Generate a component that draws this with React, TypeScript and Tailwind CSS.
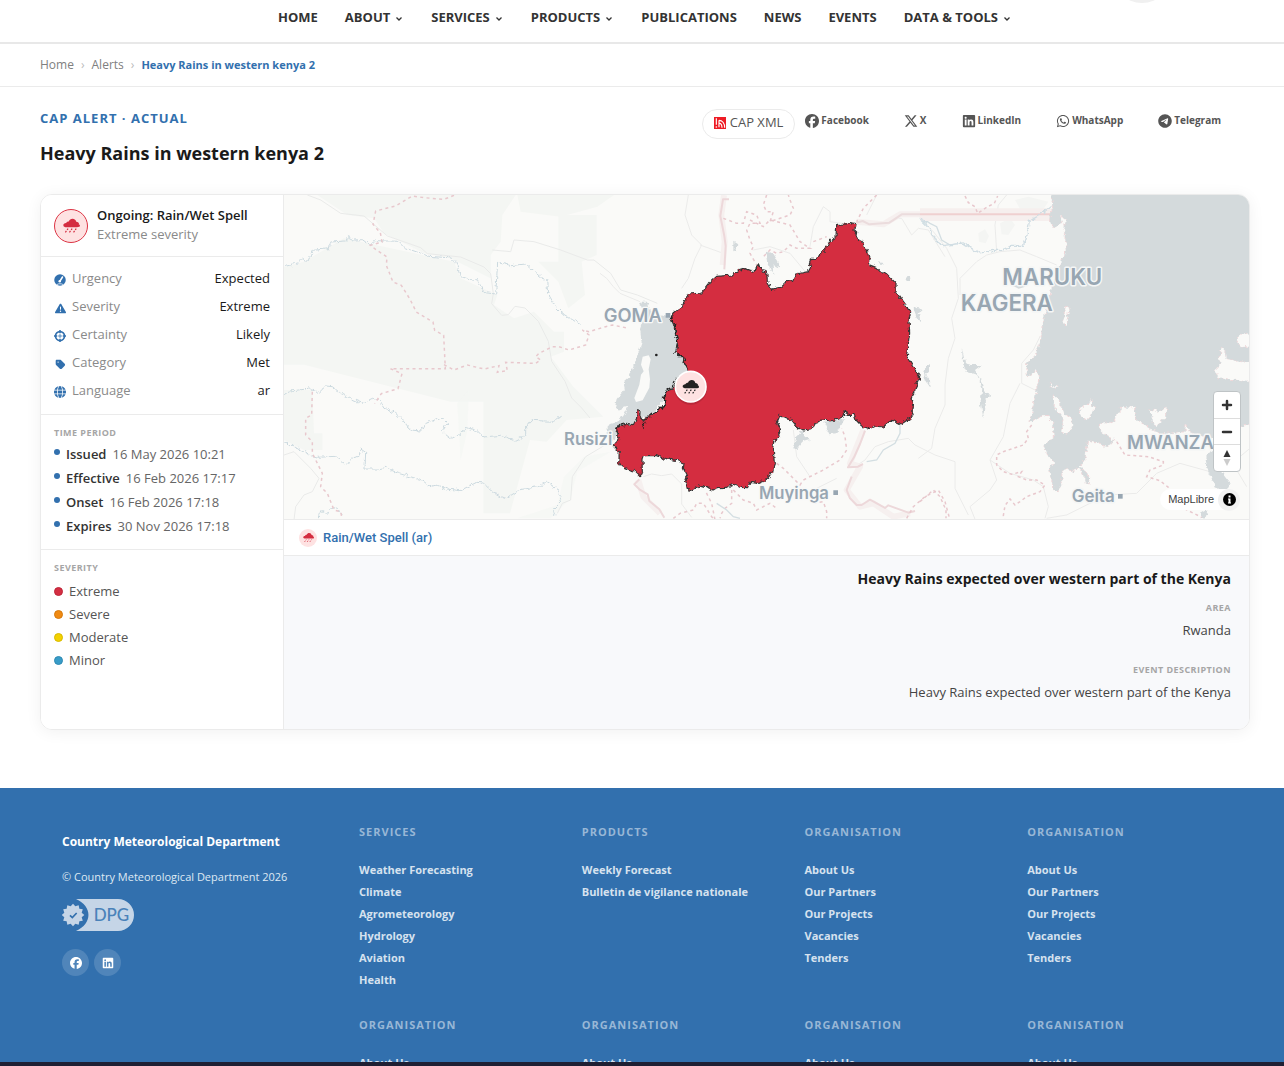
import type { ReactNode } from "react";
import {
  FaFacebook,
  FaGlobe,
  FaLinkedin,
  FaTag,
  FaTelegram,
  FaTriangleExclamation,
  FaWhatsapp,
  FaXTwitter,
} from "react-icons/fa6";

const navItems = [
  { label: "HOME" },
  { label: "ABOUT", menu: true },
  { label: "SERVICES", menu: true },
  { label: "PRODUCTS", menu: true },
  { label: "PUBLICATIONS" },
  { label: "NEWS" },
  { label: "EVENTS" },
  { label: "DATA & TOOLS", menu: true },
];

const shareLinks = [
  { label: "Facebook", icon: <FaFacebook size={14} /> },
  { label: "X", icon: <FaXTwitter size={14} /> },
  { label: "LinkedIn", icon: <FaLinkedin size={14} /> },
  { label: "WhatsApp", icon: <FaWhatsapp size={14} /> },
  { label: "Telegram", icon: <FaTelegram size={14} /> },
];

const times = [
  ["Issued", "16 May 2026 10:21"],
  ["Effective", "16 Feb 2026 17:17"],
  ["Onset", "16 Feb 2026 17:18"],
  ["Expires", "30 Nov 2026 17:18"],
];

const legend = [
  { label: "Extreme", dot: "bg-[#d42e42] border-[#bd2639]" },
  { label: "Severe", dot: "bg-[#f08a12] border-[#d67a0d]" },
  { label: "Moderate", dot: "bg-[#f3d100] border-[#d8ba00]" },
  { label: "Minor", dot: "bg-[#389cc8] border-[#2f8ab3]" },
];

const organisation = ["About Us", "Our Partners", "Our Projects", "Vacancies", "Tenders"];

const footerColumns = [
  {
    title: "SERVICES",
    links: ["Weather Forecasting", "Climate", "Agrometeorology", "Hydrology", "Aviation", "Health"],
  },
  { title: "PRODUCTS", links: ["Weekly Forecast", "Bulletin de vigilance nationale"] },
  { title: "ORGANISATION", links: organisation },
  { title: "ORGANISATION", links: organisation },
  { title: "ORGANISATION", links: ["About Us"] },
  { title: "ORGANISATION", links: ["About Us"] },
  { title: "ORGANISATION", links: ["About Us"] },
  { title: "ORGANISATION", links: ["About Us"] },
];

function RainCloudShape() {
  return (
    <>
      <path d="M12 30C5 30 1 28 1 24c0-3 3-6 8-6 1-3 4-5 8-5 2-5 6-8 11-8 6 0 10 4 11 9 5 1 8 3 8 6l-1 1c3 1 4 3 4 5 0 3-4 4-9 4z" />
      <path
        d="m15 34-3 4m-2 3-3 4M27 34l-3 4m-2 3-3 4M39 34l-3 4m-2 3-3 4"
        fill="none"
        stroke="currentColor"
        strokeWidth="3.500"
      />
    </>
  );
}

function RainCloud({ size }: { size: number }) {
  return (
    <svg width={size} height={size} viewBox="0 0 50 50" fill="currentColor" aria-hidden="true">
      <RainCloudShape />
    </svg>
  );
}

function GaugeIcon() {
  return (
    <svg width="12" height="12" viewBox="0 0 24 24" aria-hidden="true">
      <circle cx="12" cy="12" r="11.500" fill="currentColor" />
      <path d="m12 14 5-8" stroke="#fff" strokeWidth="3" strokeLinecap="round" />
      <circle cx="11.500" cy="14.500" r="2.500" fill="#fff" />
      <path d="M6 21c3-2 9-2 12 0" fill="none" stroke="#fff" strokeWidth="1.500" />
    </svg>
  );
}

function TargetIcon() {
  return (
    <svg width="12" height="12" viewBox="0 0 24 24" fill="none" stroke="currentColor" aria-hidden="true">
      <circle cx="12" cy="12" r="9" strokeWidth="3.500" />
      <path d="M12 0v6M12 18v6M0 12h6M18 12h6" strokeWidth="3" />
      <path d="M12 7v10M7 12h10" strokeWidth="1.500" />
    </svg>
  );
}

function Chevron() {
  return (
    <svg width="10" height="10" viewBox="0 0 10 10" fill="none" stroke="currentColor" strokeWidth="1.300" aria-hidden="true">
      <path d="m2.500 4.500 2.500 2.500 2.500-2.500" />
    </svg>
  );
}

function CapLogo() {
  return (
    <svg width="12" height="12" viewBox="0 0 36 36" aria-hidden="true">
      <path fill="#ee1c25" d="M0 0h36v36H0z" />
      <path
        d="M7 4v19M15 10v21M15 10c10 0 17 9 17 22M15 18c6 1 9 6 9 14"
        fill="none"
        stroke="#fff"
        strokeWidth="3.500"
      />
      <circle cx="7" cy="30" r="2.500" fill="#fff" />
    </svg>
  );
}

function DpgBadge() {
  const points = Array.from({ length: 24 }, (_, i) => {
    const r = i % 2 ? 27 : 34;
    const a = (i * Math.PI) / 12;
    return `${(33 + r * Math.sin(a)).toFixed(1)},${(48 - r * Math.cos(a)).toFixed(1)}`;
  }).join(" ");
  return (
    <svg width="72" height="32" viewBox="0 0 216 96" aria-label="DPG" role="img">
      <path d="M42 0h126a48 48 0 0 1 0 96H42c50-22 50-74 0-96" fill="#c5d5e7" />
      <polygon points={points} fill="#c5d5e7" />
      <path d="m24 49 7 7 13-14" fill="none" stroke="#3270ae" strokeWidth="5" />
      <text x="95" y="66" fill="#4a82b9" fontSize="51" fontFamily="Lato, sans-serif" fontWeight="500">
        DPG
      </text>
    </svg>
  );
}

function AlertMap() {
  return (
    <svg
      className="block h-full w-full"
      viewBox="0 0 965 324"
      preserveAspectRatio="xMidYMid slice"
      role="img"
      aria-label="Map of the alert area"
    >
      <defs>
        {/* roughens shores, rivers and borders */}
        <filter id="rough" x="-5%" y="-5%" width="110%" height="110%" colorInterpolationFilters="sRGB">
          <feTurbulence type="fractalNoise" baseFrequency="0.07" numOctaves="3" seed="4" />
          <feDisplacementMap in="SourceGraphic" scale="16" xChannelSelector="R" yChannelSelector="G" />
        </filter>
      </defs>
      <rect width="965" height="324" fill="#fafaf8" />
      {/* western forests, rivers and districts */}
      <g transform="translate(0 -5) scale(.33333)">
        <g fill="#f4f6f3">
          <path d="M0 15h100l90 60 80 10 30 45 120 60 80 15 120 60v-70l30-40 5-80 40-60h-90V15H0zM60 524H0V230l60-15 120-70 330 70 20 50 110 50-10 30 60 40 60-20 60 60h30v60l-80 30-40 60-30 60H500z" />
          <path d="M823 75h115v120l-45 20 10 100-50 40-30-80-60-60h60zM598 530h90l100-40 20 20 60 80 90 90-110 10-60 65-50-5-60 220H598zM60 780h55v-50H90l-5-130H0v150zM700 15h290l-50 35-110 30-120-15z" />
          <path d="M520 640l35-40-5 120-20 90zM840 860l60-60 80-15-100 60-20 80-60 60h-100l120-40z" opacity=".6" />
        </g>
        <g fill="none" stroke="#e9eae9" strokeWidth="3">
          <path d="m70 15 40 15 60 40 70 8 70 60 100 35 20 18 100 10 70 30 20 20 8 60-5 30 30 35 20-2 20-25 30 5 40 40 30 60 10 60 40 60 20 50 30 30 25 30M625 180l55 5 10-35 60 5 80 25 80 30 20 0 50 40 30 50 50 15 60 25M0 795l30-10 50 50 25 30-20 40-25 10-25 35-5 40M820 970l15-30 25-10 5-70 40-60 50-30 20-15" />
        </g>
        <g fill="none" stroke="#cbd9df" strokeWidth="3" strokeLinejoin="round" filter="url(#rough)">
          <path d="m0 230 45-12 10-10 20 3 10-30 50-5 5-20 45-3 5-13 20 10 25-1 25 18 15-15 70 2 20 20 70 25 70 5 10 10 15 45 35 12 15-2 20 38 35 5 6-95 40 10 45-5 50 42 12 5 3 40 25 42 20 20 52 32" />
          <path d="m0 615 20-12 40-5 15-8 10 10 20 8 20-20 20 2 25 20 30 15 35 15 30-15 20 5 15 25 30 10 30 30 20 25 30 3 10-20 40-18 20 5 10 10-15 25 25 20 30-15 20-17 30 10 20 18 50-5 45 15 30-15 0-20 20-25 60 3 25-12" />
          <path d="m0 755 15 12 15-1 15 10 35 20 20 6 55-3 30 25 20-20 20-5 5-22 15 10-2 50 40 0 20-5 40 18 70 20 25 20 20-5 30 12 40 5 50-25 20 2 30 30 40 15 40-25 60-10 20-15 30 20 15 40-25 25 5 20M105 985l5-20 20 5 15-20 15 5 15 20" />
        </g>
        <path
          d="m510 16-30 12-60-5-35-5-50 30-60 15-8 40 22 25 5 28-35 10 20 15 30 20-2 25 20 50 25 10 25 40 20 40 50 30 5 25 27 15 5 100-165 0 35 15-12 45-50 15-20 30M480 524l30 16 40-15 50 12 45-10-5 20 30-5-5-25 90 3 15-10-15-10 10-10 40-20 20 0 30 10 50-15 10-30-20-15 20 5 50-15 20-5 50 10M85 605l-2 70-18 10v50l20 20 0 35 30 60-5 40 20 20 20 50 20 5 5 25"
          fill="none"
          stroke="#e8c8cd"
          strokeWidth="4.500"
          strokeDasharray="9 10"
        />
      </g>
      {/* Lake Kivu, the borders around Rwanda and the alert area */}
      <g transform="translate(316 -5) scale(.33333)">
        <path
          d="M120 338h25l5 25 70 20 20 110 30 50-80 90-35 40-45 20-25 15-35 15-5 25-15 8-10-20 0-30 25-8 25-20 15-30-15 2-10 15-15-15 5-20 25-30-5-25 20-18 15-40 20-60-5-40 15-45z"
          fill="#d4dadc"
          filter="url(#rough)"
        />
        <path d="m128 500 18-4 6 12-6 30 4 30-2 25-20 38-20 5-5-12 15-40 5-30 8-10-8-20zM72 525l18 20-10 17-20 2z" fill="#fafaf8" />
        <g fill="none" stroke="#ebebea" strokeWidth="3">
          <path d="m0 250 20 15 20 25 20 20 60 25M265 15l-10 60 20 60 30 30-20 40-20 60-20 30M300 165l70 25M630 170l10-60 30-60 20 15 0 30 70 10M830 15l-30 60M865 85l40 0 30 50 20-20 30 5 50 80M130 860l25-8 30 5 30-5 30 30 0 60 30 40M580 720l10 80 40 60M765 830l30-20 30-40 40-15 60-10 20 20 60 30 60 20 0 80 40 80M460 180l50-10 60 20 50 60M620 925l30-30 60-30" />
        </g>
        <g fill="#d4dadc" filter="url(#rough)">
          <path d="m400 152 12 8-2 20-10 4zM500 185l18 5 20 35-5 10-15-10 2 30-15-35zM673 698l60-10-20 40-25 5zM834 217l18 2-8 6zM915 265l15-5 2 12-10 4zM940 355l12-5 8 10 8 5-12 5 8 28-14-18zM970 545l8-15 12-8 0 20-12 12 12 15 2 25-14-20zM590 735l20-15 5 20 15 10-20 5-20 25-10-5z" />
        </g>
        <g fill="none" stroke="#f6f0ef" strokeWidth="18" strokeLinejoin="round">
          <path d="M372 15l-8 60 10 80-6 70M1050 73H900l-50 30-80-8M115 870l15 50 50 50M790 720l-40 100 30 10-40 70 40 50 40-10 60 40 50-10" />
        </g>
        <g fill="none" stroke="#edd8da" strokeWidth="6" strokeLinejoin="round">
          <path d="M387 28l-18 0-8 50 12 60 4 30-4 70M118 868l-15 15 15 15 25 15 5 20 30 25 15 25M795 722l-15 40-18 40-18 30 30-2 15-8M755 860l-15 40 10 25 20 20 15 0 25-16 45 25 10-8 60 22 20-5" />
          <path d="M1050 73H905l-22 15-15 10-60 5-20-10-20 5" stroke="#ebdcdd" />
        </g>
        <path
          d="M500 15l-10 30 10 20 20 0-10 30 60-20 10-20-10-25-5-15M370 85l40 15 20 0 10-35 30 10 10 25-30 0-10 20 10 30 10 20-10 20 20 35M450 90l40 20 20-20 60 15 30 50 30 20-40 0-20-10-20 20-20 5-20-10-20 20M640 155l40-15M830 15l-40 40-20 40M530 820l20 15 30 30 20 20 10-15 60-30 50-30 20-30-5-40-10-25M220 985l20-15 40-10 10-20 20 0 25 40 10 10-10-50-20-40M395 900l0 40-20 15-10 15-5 15M400 900l30 30 30 10 10 20 40-20 20 15M640 940l30-5 10 30 0 20M920 985l20-35 35-30 40-20 20 35 15 55"
          fill="none"
          stroke="#e8c8cd"
          strokeWidth="4.500"
          strokeDasharray="9 10"
        />
        <path d="M900 705l0 25-15 30-35 20-20 30-30 5M960 80l30 20 20 10 15 40 25 15M350 940l30 20 20 20 20 5" fill="none" stroke="#d3dee2" strokeWidth="4" />
        <path
          d="M710 103l42-1-2-4 15 2-3 18 8 8-2 16 17 10 5 18 10 15 7 20-1 19 22 8 15 16 17 4 20 20 8 8v25l17 25 27 38-5 22 2 40-4 30-6 37 16 28 25 37-13 28-3 17-11 18 7 25-2 20-8 15-22 15-3 3-30-15-15 14-10 9-25-3-17 8-23-8-17-18-6-17h-17l-12-7-11 20-32 7-30-3-15 10-10 18-23 5-20-11-17-22-20-8-18-6-8 19 9 20 2 25-15 12-5 28 3 40-5 25-18 23-25 10-25-4-7 19-23-1-20-9-20 9-30 1-10 7-15-7-22-7-18 9-18 9-5-19-7-15 5-15-10-20 2-15-17-8-25-4-30-6-10-5-20-1-20 2-4 12 1 35-7 15-17-17-18-5-23-10-6-8 2-35-18-20 10-8 5-17-5-20 8-15 17 1 5-6 20 4 10-19v-23l13 3-1 20 8 12 10-18 15-2 10-10 15-8 15-20-5-18 10-19 18-5 10-18 5-15 32-17-3-15-10-15-7-20-12 0-5-12 6-23-6-35-8-25-7-15 9-18 21-17 22-40 40-3 25-32 20-18 50-4 15-13 20-6 15 6 12 7 4-16 11-12 7 18 16 4 2 32 12 23 26-6 25-23 12 6 13-23 35-7 7-13-4-13 5-14h17l30-33 10-20 18-10z"
          fill="#d42d40"
          stroke="#353535"
          strokeWidth="3.500"
          strokeLinejoin="round"
          filter="url(#rough)"
        />
        <g fill="none" stroke="#222" strokeWidth="4" strokeDasharray="9 3" filter="url(#rough)">
          <path d="m213 380 10 20 4 35 6 20-6 30-8 5M234 492l14 8 6 15 12 25M222 570l-5 20-16 10-8 20 2 20-15 18-25 15-15 12 0 5-10 20-5-10M75 712l-5-12-15 5-6 15" />
        </g>
        <circle cx="169" cy="495" r="4" fill="#222" />
        <g fontFamily="Inter, sans-serif" fontWeight="600" fill="#98a6b2" stroke="#f8f9f8" strokeWidth="8" paintOrder="stroke" strokeLinejoin="round">
          <text x="11" y="395" fontSize="55">GOMA</text>
          <text x="-108" y="764" fontSize="50">Rusizi</text>
          <text x="477" y="926" fontSize="50">Muyinga</text>
        </g>
        <path d="M197 369h14v14h-14zM700 901h14v14h-14z" fill="#98a6b2" />
        <g>
          <circle cx="272" cy="594" r="50" fill="#000" opacity=".12" />
          <circle cx="272" cy="590" r="46" fill="#fee2e2" stroke="#fff" strokeWidth="5" />
          <g transform="translate(247 565)" fill="#222" color="#222">
            <RainCloudShape />
          </g>
        </g>
      </g>
      {/* Lake Victoria and its western shore */}
      <g transform="translate(636 -5) scale(.33333)">
        <g fill="none" stroke="#ebebea" strokeWidth="3">
          <path d="M0 85l40 40 40 50 30 60 5 90-20 60 10 60-20 60-10 80 0 60-30 70-10 60-40 30M260 15l-25 30-10 60 5 80M410 225l-60-25-50-20-60 5-40 10-30 20-50 50 0 50M360 440l-20 40-35 40 0 60 40 20M300 580l-30 60-20 100-40 70 20 60-20 30-60 50 20 50M210 810l60 40 70 20 30 20 15 60-10 35M380 985l60-10 120-60 90-5 60-60 70-30 90 25 60-20 60-50M950 840l30 50" />
        </g>
        <path d="M285 30l40-10 60 15-20 30-60 0zM175 130l20-12 12 20-10 22-20-5zM240 100l30-15 15 20-20 30-20-2z" fill="#f4f5f3" />
        <path d="M0 55h400v38H0z" fill="#f6efee" />
        <path d="M0 73h400" stroke="#efd0d0" strokeWidth="6" />
        <path d="M0 85l30 30 20 40 20 12 60-8 30 20 20 10 40-8 30 0 20-12 40 0 10-30 8-45 40-25 30-25" fill="none" stroke="#d0dde3" strokeWidth="4" filter="url(#rough)" />
        <g filter="url(#rough)">
          <path
            d="m393 5 5 50-10 30 10 28 27-15-4-22 16 14-5 30 6 45-2 27-14 22-10 30-17 50-10 55-17 40-5 60-18 48-25 23 2 43 28-25 8 20-13 65-15 72 40-17 15 2 15 20v45l-30 20 15 35 18 15-18 25 10 30 5 32 15 3 12-25-2-35 17-13 15 15 15-15 15 13 8 32 17 5-8-30-22-22 15-30 5-45 22 2 38 14 22-22-25-10-25-27 2-10 43-5 25-45 40 2 5 35 45 30 30 12 70-6 5-24 10 26 65 20 30-20 105-30V5z"
            fill="#d4dadc"
            stroke="#efd6d8"
            strokeWidth="3"
            strokeDasharray="6 8"
          />
          <path d="m870 785 25-15 10 40-10 25 35 45-10 20-30-5-25-50-8-35zM840 985l5-20 18-10-5 25zM125 470l10 50 20 5 30 0-20 15 25 45 5 25 20 5-20 15-5 55-8-50 5-40-15-40-32-10-10-20z" fill="#d4dadc" />
          <path
            d="M400 615l15 8 10 30 10 20 20 12 2 25-15 20-15-2 2-45-25-30-5-20zM480 655l20-10 12-20 5 25 10 5-15 20-12 15-22-15zM435 350l12-1 2 22-8 2 3 20-8 12-6-4 6-20zM950 440l15-8 35 3v34l-35 2-12-12zM905 475l10 10 2 20 40 10 40 2v60l-40-5-60-10-15-20 20-20-5-20zM685 660l20 0 10 8 25-15-5 30-25 25-15-15 0-20zM388 580l10 10 15-3-10 8-12-5z"
            fill="#fafaf8"
            stroke="#efd6d8"
            strokeWidth="3"
            strokeDasharray="5 8"
          />
        </g>
        <path
          d="M135 18l10 20 20 12 8 20 30-20 20-10 10-22M335 705l-15 20 5 20-15 20-60 20-20 10 0 30 20 20 25 8 30-8-10 15 25 10 30 0 25 15-15 20-40 15-20 15-15 10-15-18-15 20-5 30 10 30M0 935l40-35 20 20 18 40 0 25M590 755l25 40 70 5 45 15 0 10-40 15-10 20 40 12 25 20 30 50 10 10 60 30"
          fill="none"
          stroke="#e8c8cd"
          strokeWidth="4.500"
          strokeDasharray="9 9"
        />
        <path d="m278 288 20-4 18 6-20 6z" fill="#d4dadc" />
        <g fontFamily="Inter, sans-serif" fontWeight="600" fill="#98a6b2" stroke="#f4f6f6" strokeWidth="9" paintOrder="stroke" strokeLinejoin="round">
          <text x="247" y="284" fontSize="67">MARUKU</text>
          <text x="122" y="362" fontSize="67">KAGERA</text>
          <text x="621" y="778" fontSize="55">MWANZA</text>
          <text x="455" y="937" fontSize="51">Geita</text>
        </g>
        <path d="M594 912h14v14h-14z" fill="#98a6b2" />
      </g>
    </svg>
  );
}

function MapControls() {
  return (
    <>
      <div className="absolute right-2 bottom-[47px] flex w-[28px] flex-col divide-y divide-[#ddd] overflow-hidden rounded border border-[#bfc4c6] bg-white text-[#333]">
        <button type="button" aria-label="Zoom in" className="flex h-[27px] items-center justify-center">
          <svg width="12" height="12" viewBox="0 0 12 12" stroke="currentColor" strokeWidth="2.500" strokeLinecap="round">
            <path d="M6 2v8M2 6h8" />
          </svg>
        </button>
        <button type="button" aria-label="Zoom out" className="flex h-[26px] items-center justify-center">
          <svg width="12" height="12" viewBox="0 0 12 12" stroke="currentColor" strokeWidth="2.500" strokeLinecap="round">
            <path d="M2 6h8" />
          </svg>
        </button>
        <button type="button" aria-label="Reset bearing" className="flex h-[26px] items-center justify-center">
          <svg width="8" height="16" viewBox="0 0 8 16">
            <path d="M4 0 7.500 7h-7z" fill="#333" />
            <path d="M4 16 7.500 9h-7z" fill="#ccc" />
          </svg>
        </button>
      </div>
      <div className="absolute right-[9px] bottom-[9px] flex h-[21px] items-center rounded-full bg-white pl-2">
        <a href="#maplibre" className="mr-1 font-['Liberation_Sans',sans-serif] text-[11px] text-[#404040]">
          MapLibre
        </a>
        <button type="button" aria-label="Toggle attribution" className="flex size-[22px] items-center justify-center rounded-full bg-[#f2f2f2]">
          <svg width="13" height="13" viewBox="0 0 13 13">
            <circle cx="6.500" cy="6.500" r="6.500" fill="#000" />
            <path d="M5.500 2.500h2v2h-2zM5 5.500h2.500v4H8v1H5v-1h.500v-3H5z" fill="#fff" />
          </svg>
        </button>
      </div>
    </>
  );
}

function Fact({ icon, label, value }: { icon: ReactNode; label: string; value: string }) {
  return (
    <div className="flex h-7 items-center">
      <span className="mt-0.5 mr-1.5 flex w-3 justify-center text-[#3270ae]">{icon}</span>
      <dt className="text-[#8a8a8a]">{label}</dt>
      <dd className="ml-auto text-[#1a1a1a]">{value}</dd>
    </div>
  );
}

const overline = "text-[9px] leading-3 font-bold tracking-wider text-[#a6a6a6]";

export default function App() {
  return (
    <div className="flex h-screen flex-col overflow-hidden bg-white font-['Open_Sans',sans-serif] text-[13px] text-[#1a1a1a]">
      <header className="relative shrink-0 border-b-2 border-[#e8e8e8] pr-[34px] pl-10">
        <div className="absolute -top-[57px] right-[112px] size-[60px] rounded-full bg-[#f0f0f0]" />
        <nav aria-label="Main" className="flex h-[42px] justify-center gap-[27px] pt-2">
          {navItems.map((item) => (
            <a key={item.label} href="#nav" className="flex h-5 items-center gap-1 font-bold text-[#333]">
              {item.label}
              {item.menu && <Chevron />}
            </a>
          ))}
        </nav>
      </header>

      <nav aria-label="Breadcrumb" className="flex h-[43px] shrink-0 items-center gap-[7px] border-b border-[#ebebeb] pr-[34px] pl-10 text-xs text-[#808080]">
        <a href="#home">Home</a>
        <span className="text-[#bbb]">›</span>
        <a href="#alerts">Alerts</a>
        <span className="text-[#bbb]">›</span>
        <span aria-current="page" className="text-[11px] font-bold text-[#3270ae]">
          Heavy Rains in western kenya 2
        </span>
      </nav>

      <main className="shrink-0 pt-[22px] pr-[34px] pb-[58px] pl-10">
        <div className="flex items-start justify-between">
          <div>
            <p className="leading-[18px] font-bold tracking-[1px] text-[#3270ae]">CAP ALERT · ACTUAL</p>
            <h1 className="mt-3 text-lg leading-7 font-bold">Heavy Rains in western kenya 2</h1>
          </div>
          <div className="flex items-start pr-[29px]">
            <a href="#xml" className="flex h-[30px] items-center gap-1 rounded-full border border-[#ebebeb] px-[11px] pb-0.5 text-[#555]">
              <CapLogo />
              CAP XML
            </a>
            <div className="ml-2.5 flex h-[23px] items-center gap-[35px]">
              {shareLinks.map((link) => (
                <a key={link.label} href="#share" className="flex items-center gap-0.5 text-[10px] font-bold text-[#555]">
                  {link.icon}
                  {link.label}
                </a>
              ))}
            </div>
          </div>
        </div>

        <section className="mt-[27px] flex overflow-hidden rounded-xl border border-[#ebebeb] shadow-[0_2px_16px_rgba(0,0,0,0.06)]">
          <aside className="w-[243px] shrink-0 border-r border-[#ebebeb] bg-white">
            <div className="flex h-[62px] items-center gap-[9px] border-b border-[#ebebeb] px-[13px]">
              <span className="flex size-[34px] items-center justify-center rounded-full border border-[#dc3545] bg-[#fee2e2] text-[#d42d40]">
                <RainCloud size={17} />
              </span>
              <div className="pb-0.5 leading-[19px]">
                <h2 className="font-semibold">Ongoing: Rain/Wet Spell</h2>
                <p className="text-[#8a8a8a]">Extreme severity</p>
              </div>
            </div>
            <dl className="border-b border-[#ebebeb] px-[13px] pt-2 pb-[9px]">
              <Fact icon={<GaugeIcon />} label="Urgency" value="Expected" />
              <Fact icon={<FaTriangleExclamation size={11} />} label="Severity" value="Extreme" />
              <Fact icon={<TargetIcon />} label="Certainty" value="Likely" />
              <Fact icon={<FaTag size={11} />} label="Category" value="Met" />
              <Fact icon={<FaGlobe size={12} />} label="Language" value="ar" />
            </dl>
            <div className="border-b border-[#ebebeb] px-[13px] pt-3 pb-2.5">
              <h3 className={overline}>TIME PERIOD</h3>
              <ul className="mt-1">
                {times.map(([label, value]) => (
                  <li key={label} className="flex h-6 items-center">
                    <span className="mr-1.5 mb-1.5 size-1.5 rounded-full bg-[#3270ae]" />
                    <span className="mr-1.5 font-semibold text-[#333]">{label}</span>
                    <span className="text-[#666]">{value}</span>
                  </li>
                ))}
              </ul>
            </div>
            <div className="px-[13px] pt-3">
              <h3 className={overline}>SEVERITY</h3>
              <ul className="mt-1.5 text-[#555]">
                {legend.map((item) => (
                  <li key={item.label} className="flex h-[23px] items-center gap-1.5">
                    <span className={`size-[9px] rounded-full border ${item.dot}`} />
                    {item.label}
                  </li>
                ))}
              </ul>
            </div>
          </aside>

          <div className="flex min-w-0 flex-1 flex-col">
            <div className="relative h-[324px]">
              <AlertMap />
              <MapControls />
            </div>
            <div className="flex h-[37px] items-center border-y border-[#ebebeb] px-[15px]">
              <button type="button" className="flex items-center gap-1.5 font-[Roboto,sans-serif] text-[13px] font-medium text-[#3270ae]">
                <span className="flex size-[18px] items-center justify-center rounded-full bg-[#fee2e2] text-[#d42d40]">
                  <RainCloud size={11} />
                </span>
                Rain/Wet Spell (ar)
              </button>
            </div>
            <div className="flex h-[173px] flex-col items-end bg-[#f8f9fb] px-[18px] pt-3 text-right text-[#444]">
              <h2 className="text-sm leading-[22px] font-bold text-[#1a1a1a]">
                Heavy Rains expected over western part of the Kenya
              </h2>
              <h3 className={`mt-3 ${overline}`}>AREA</h3>
              <p className="mt-1.5 leading-5">Rwanda</p>
              <h3 className={`mt-6 ${overline}`}>EVENT DESCRIPTION</h3>
              <p className="mt-1.5 leading-5">Heavy Rains expected over western part of the Kenya</p>
            </div>
          </div>
        </section>
      </main>

      <footer className="flex min-h-0 flex-1 overflow-hidden bg-[#3270ae] pr-[34px] pl-[62px] text-[11px] text-white">
        <div className="w-[297px] shrink-0 pt-11">
          <p className="text-xs leading-5 font-bold">Country Meteorological Department</p>
          <p className="mt-[15px] leading-5 text-[#dfe9f3]">© Country Meteorological Department 2026</p>
          <a href="#dpg" className="mt-3 block w-[72px]">
            <DpgBadge />
          </a>
          <div className="mt-[18px] flex gap-[5px]">
            <a href="#facebook" aria-label="Facebook" className="flex size-[27px] items-center justify-center rounded-full bg-white/15">
              <FaFacebook size={12} />
            </a>
            <a href="#linkedin" aria-label="LinkedIn" className="flex size-[27px] items-center justify-center rounded-full bg-white/15">
              <FaLinkedin size={12} />
            </a>
          </div>
        </div>
        <div className="grid flex-1 grid-cols-4 content-start gap-y-6 pt-[34px]">
          {footerColumns.map((column, i) => (
            <div key={i}>
              <h3 className="leading-5 font-bold tracking-[1px] text-[#98b7d6]">{column.title}</h3>
              <ul className="mt-[17px] leading-[22px] font-bold text-[#d6e2ef]">
                {column.links.map((link) => (
                  <li key={link}>
                    <a href="#footer">{link}</a>
                  </li>
                ))}
              </ul>
            </div>
          ))}
        </div>
      </footer>
      <div className="h-1 shrink-0 bg-[#1f1f33]" />
    </div>
  );
}
